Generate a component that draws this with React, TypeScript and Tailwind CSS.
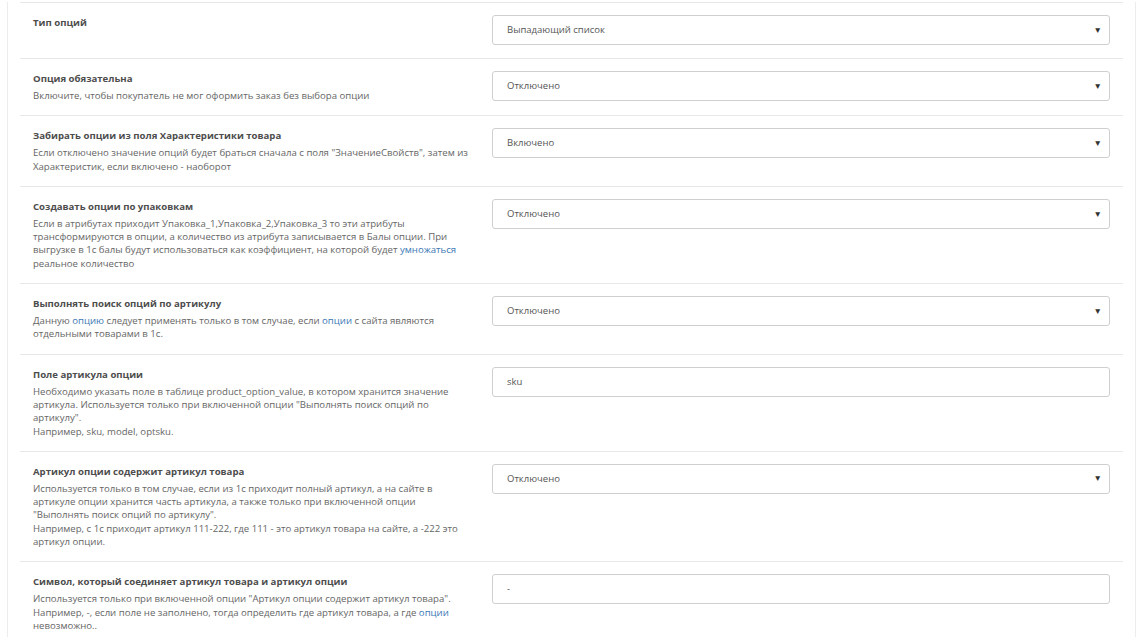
import type { ReactNode } from 'react';

type Row = {
  title: string;
  lines?: ReactNode[];
  kind: 'select' | 'input';
  value: string;
};

const Hl = ({ children }: { children: ReactNode }) => (
  <span className="text-[#3b78b5]">{children}</span>
);

// line breaks follow the reference wrapping
const rows: Row[] = [
  { title: 'Тип опций', kind: 'select', value: 'Выпадающий список' },
  {
    title: 'Опция обязательна',
    lines: ['Включите, чтобы покупатель не мог оформить заказ без выбора опции'],
    kind: 'select',
    value: 'Отключено',
  },
  {
    title: 'Забирать опции из поля Характеристики товара',
    lines: [
      'Если отключено значение опций будет браться сначала с поля "ЗначениеСвойств", затем из',
      'Характеристик, если включено - наоборот',
    ],
    kind: 'select',
    value: 'Включено',
  },
  {
    title: 'Создавать опции по упаковкам',
    lines: [
      'Если в атрибутах приходит Упаковка_1,Упаковка_2,Упаковка_3 то эти атрибуты',
      'трансформируются в опции, а количество из атрибута записывается в Балы опции. При',
      <>
        выгрузке в 1с балы будут использоваться как коэффициент, на которой будет{' '}
        <Hl>умножаться</Hl>
      </>,
      'реальное количество',
    ],
    kind: 'select',
    value: 'Отключено',
  },
  {
    title: 'Выполнять поиск опций по артикулу',
    lines: [
      <>
        Данную <Hl>опцию</Hl> следует применять только в том случае, если <Hl>опции</Hl> с сайта
        являются
      </>,
      'отдельными товарами в 1с.',
    ],
    kind: 'select',
    value: 'Отключено',
  },
  {
    title: 'Поле артикула опции',
    lines: [
      'Необходимо указать поле в таблице product_option_value, в котором хранится значение',
      'артикула. Используется только при включенной опции "Выполнять поиск опций по',
      'артикулу".',
      'Например, sku, model, optsku.',
    ],
    kind: 'input',
    value: 'sku',
  },
  {
    title: 'Артикул опции содержит артикул товара',
    lines: [
      'Используется только в том случае, если из 1с приходит полный артикул, а на сайте в',
      'артикуле опции хранится часть артикула, а также только при включенной опции',
      '"Выполнять поиск опций по артикулу".',
      'Например, с 1с приходит артикул 111-222, где 111 - это артикул товара на сайте, а -222 это',
      'артикул опции.',
    ],
    kind: 'select',
    value: 'Отключено',
  },
  {
    title: 'Символ, который соединяет артикул товара и артикул опции',
    lines: [
      'Используется только при включенной опции "Артикул опции содержит артикул товара".',
      <>
        Например, -, если поле не заполнено, тогда определить где артикул товара, а где{' '}
        <Hl>опции</Hl>
      </>,
      'невозможно..',
    ],
    kind: 'input',
    value: '-',
  },
];

function Control({ kind, value }: { kind: Row['kind']; value: string }) {
  return (
    <div className="flex h-[30px] items-center justify-between rounded-[3px] border border-[#cfcfcf] bg-white pl-[14px] pr-[7px] text-[9.5px] text-[#555]">
      <span>{value}</span>
      {kind === 'select' && <span className="text-[8.5px] text-[#333]">▼</span>}
    </div>
  );
}

export default function App() {
  return (
    <div
      className="min-h-screen bg-white pt-[2px]"
      style={{ fontFamily: '"Open Sans", "Noto Sans", sans-serif' }}
    >
      <div className="ml-[7px] mr-[1px] min-h-[640px] border-x border-[#ececec] px-[12px]">
        {rows.map((r, i) => (
          <div
            key={i}
            className="grid grid-cols-[445px_1fr] gap-x-[14px] border-t border-[#e8e8e8] px-[13px] pb-[13px] pt-[12px]"
          >
            <div className="pt-[1px]">
              <div className="mb-[3px] whitespace-nowrap text-[9.6px] font-bold leading-[14px] text-[#4d4d4d]">
                {r.title}
              </div>
              {r.lines?.map((l, j) => (
                <div key={j} className="whitespace-nowrap text-[9.6px] leading-[13.3px] text-[#666]">
                  {l}
                </div>
              ))}
            </div>
            <div>
              <Control kind={r.kind} value={r.value} />
            </div>
          </div>
        ))}
      </div>
    </div>
  );
}
